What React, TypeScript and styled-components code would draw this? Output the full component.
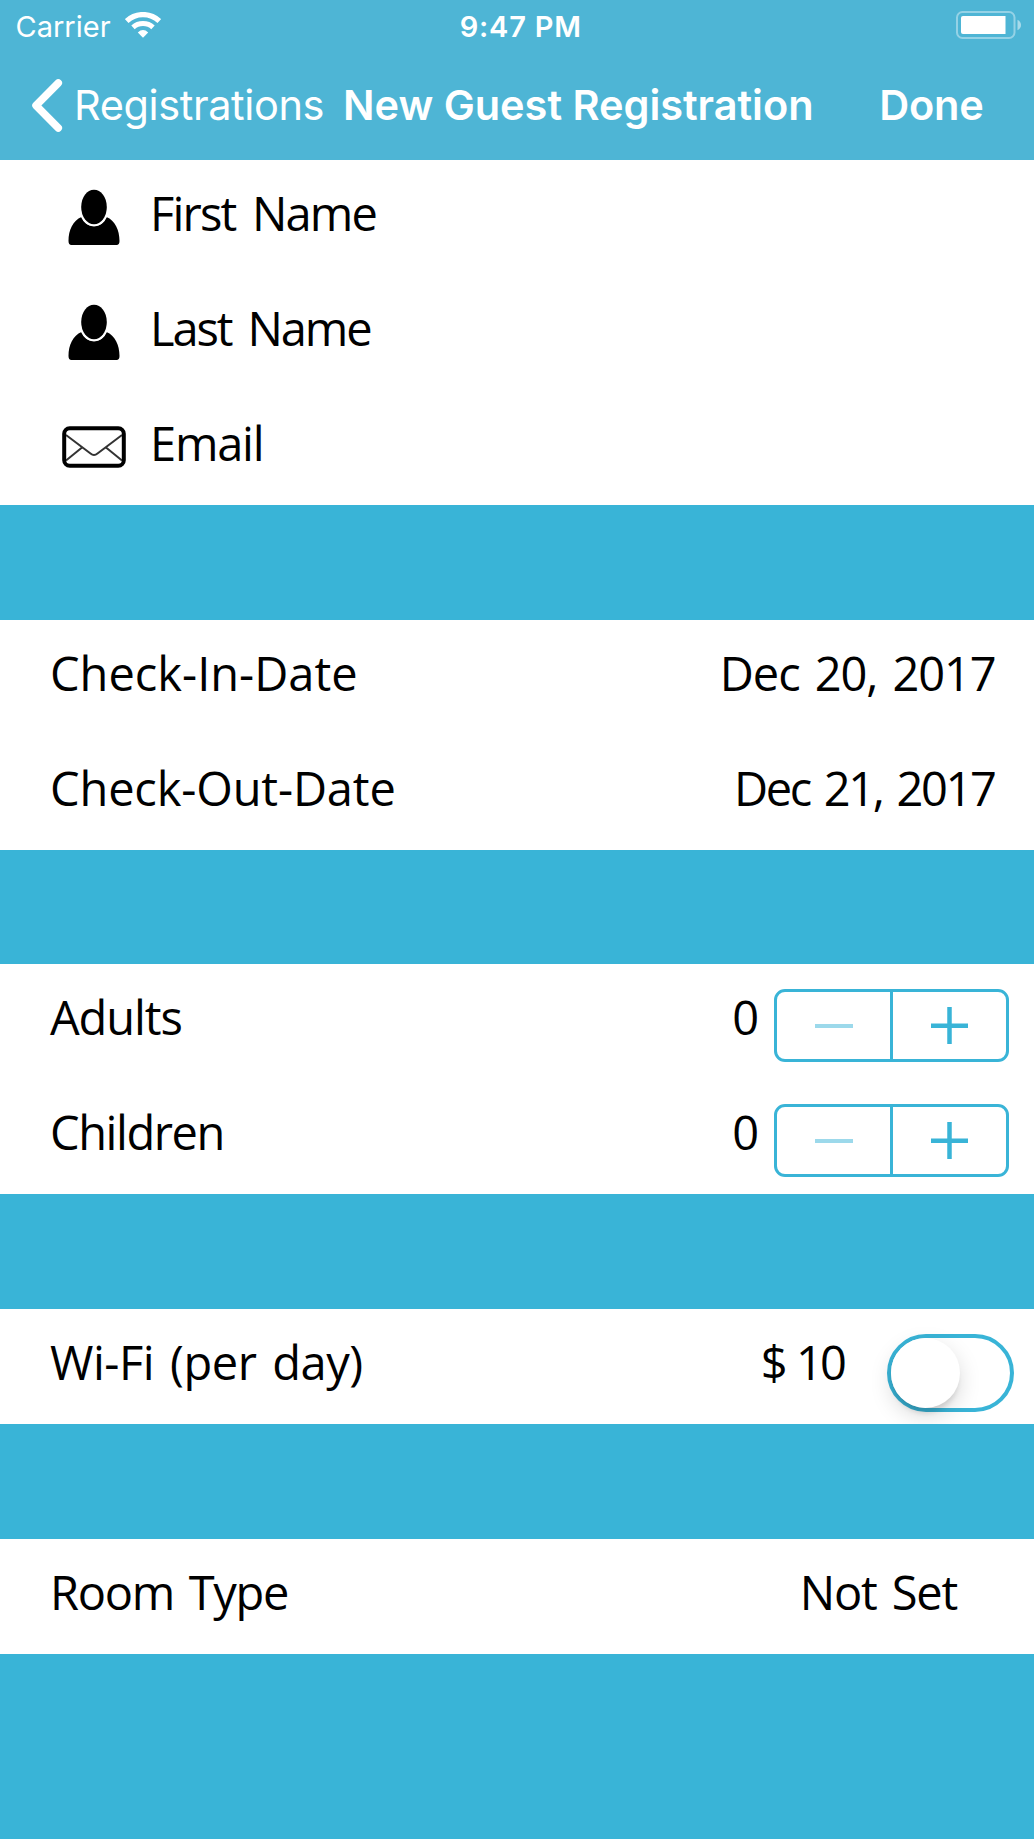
import React, { useState } from 'react';
import styled, { createGlobalStyle } from 'styled-components';

const accent = '#39b4d7';

const GlobalStyle = createGlobalStyle`
  *, *::before, *::after { box-sizing: border-box; }
  body { margin: 0; background: ${accent}; }
`;

const Screen = styled.main`
  display: flex;
  flex-direction: column;
  width: 1034px;
  height: 1839px;
  overflow: hidden;
  background: ${accent};
  color: #000;
  font-family: 'Open Sans', 'Noto Sans', sans-serif;
`;

const Header = styled.header`
  flex: none;
  height: 160px;
  background: #4eb5d5;
  color: #fff;
  font-family: Inter, 'Liberation Sans', sans-serif;
  white-space: nowrap;
`;

const StatusBar = styled.div`
  display: grid;
  grid-template-columns: 1fr auto 1fr;
  height: 52px;
  padding: 0 12px 0 15.5px;
  font-size: 29px;
  line-height: 53px;
`;

const Carrier = styled.div`
  display: flex;
  align-items: flex-start;
  gap: 14px;
  svg { margin-top: 12px; }
`;

const Clock = styled.time`
  margin-left: 4px;
  font-weight: 600;
  letter-spacing: 0.78px;
`;

const BatteryIcon = styled.svg`
  justify-self: end;
  margin-top: 11px;
`;

const NavBar = styled.nav`
  display: flex;
  padding: 0 50.5px 0 30px;
  font-size: 41.5px;
  line-height: 106px;
`;

const NavButton = styled.button<{ $strong?: boolean }>`
  display: flex;
  align-items: flex-start;
  margin: 0;
  padding: 0;
  border: 0;
  background: none;
  color: inherit;
  font: inherit;
  font-weight: ${(p) => (p.$strong ? 600 : 400)};
  letter-spacing: ${(p) => (p.$strong ? '-0.2px' : '-0.39px')};
  margin-left: ${(p) => (p.$strong ? 'auto' : '0')};
  svg { margin: 27px 10px 0 0; }
`;

const Title = styled.h1`
  margin: 0 0 0 19px;
  font: inherit;
  font-weight: 600;
  letter-spacing: -0.03px;
`;

const Form = styled.div`
  display: flex;
  flex-direction: column;
  gap: 114.7px;
`;

const Section = styled.section`
  background: #fff;
`;

const Row = styled.div<{ $end?: number }>`
  display: flex;
  align-items: flex-start;
  height: 115px;
  padding: 0 ${(p) => p.$end ?? 0}px 0 50px;
  font-size: 47px;
  line-height: 107px;
  white-space: nowrap;
`;

const SwitchRow = styled(Row)`
  overflow: hidden;
`;

const IconSlot = styled.span`
  flex: none;
  display: flex;
  justify-content: center;
  width: 87px;
  margin-right: 13px;
`;

const PersonSlot = styled(IconSlot)`
  padding-top: 29px;
`;

const MailSlot = styled(IconSlot)`
  padding-top: 36px;
`;

const Label = styled.span<{ $tracking: number; $gap?: number }>`
  letter-spacing: ${(p) => p.$tracking}px;
  word-spacing: ${(p) => p.$gap ?? 4}px;
`;

const Value = styled(Label)`
  margin-left: auto;
`;

const StepperBox = styled.div`
  display: grid;
  grid-template-columns: 113px 116px;
  width: 235px;
  height: 73px;
  margin: 25px 0 0 15px;
  border: 3px solid ${accent};
  border-radius: 11px;
  overflow: hidden;
`;

const StepButton = styled.button`
  display: flex;
  align-items: center;
  justify-content: center;
  padding: 0;
  border: 0;
  background: none;
  color: ${accent};
  & + & { border-left: 3px solid ${accent}; }
  &:disabled { padding-left: 1px; color: #9cd9eb; }
`;

const Switch = styled.button<{ $on: boolean }>`
  display: flex;
  flex: none;
  justify-content: ${(p) => (p.$on ? 'flex-end' : 'flex-start')};
  width: 127px;
  height: 78px;
  margin: 25px 0 0 43px;
  padding: 0;
  border: 4px solid ${accent};
  border-radius: 39px;
  background: ${(p) => (p.$on ? accent : '#fff')};
`;

const Knob = styled.span`
  width: 69px;
  height: 70px;
  border-radius: 50%;
  background: #fff;
  box-shadow: 0 8px 22px rgba(0, 0, 0, 0.15), 0 7px 5px -2px rgba(0, 0, 0, 0.11);
`;

function PersonIcon() {
  return (
    <svg width="54" height="58" viewBox="0 0 54 58">
      <path d="M14.5 28Q18 37 27 37T39.5 28C48 31.5 52.500 41 52.500 52Q52.500 56 49.500 56H4.500Q1.500 56 1.500 52C1.500 41 6 31.500 14.500 28Z" />
      <ellipse cx="27" cy="18.500" rx="14.900" ry="19" fill="#fff" />
      <ellipse cx="27" cy="18" rx="12.800" ry="17.200" />
    </svg>
  );
}

function MailIcon() {
  return (
    <svg width="64" height="42" viewBox="0 0 64 42" fill="none" stroke="#000">
      <rect x="2.200" y="2.200" width="59.600" height="37.600" rx="5.500" strokeWidth="4" />
      <path d="M4 9 28.500 27.500Q32 30.500 35.500 27.500L60 9M4 34.500 20 21.500M60 34.500 44 21.500" strokeWidth="2" strokeOpacity=".8" />
    </svg>
  );
}

function Stepper({ value, onChange }: { value: number; onChange: (n: number) => void }) {
  return (
    <StepperBox>
      <StepButton disabled={value === 0} aria-label="Decrease" onClick={() => onChange(value - 1)}>
        <svg width="38" height="39" viewBox="0 0 38 39"><path d="M0 18H38V22H0Z" fill="currentColor" /></svg>
      </StepButton>
      <StepButton aria-label="Increase" onClick={() => onChange(value + 1)}>
        <svg width="37" height="37" viewBox="0 0 37 37"><path d="M0 18.700H37M18.500 0V37" stroke="currentColor" strokeWidth="4.500" /></svg>
      </StepButton>
    </StepperBox>
  );
}

export default function App() {
  const [adults, setAdults] = useState(0);
  const [children, setChildren] = useState(0);
  const [wifi, setWifi] = useState(false);
  return (
    <Screen>
      <GlobalStyle />
      <Header>
        <StatusBar>
          <Carrier>
            Carrier
            <svg width="36" height="26" viewBox="0 0 36 26" fill="none" stroke="#fff">
              <path d="M1.700 9C11 .5 25 .5 34.300 9" strokeWidth="5.400" />
              <path d="M8 15.400C13.500 10.300 22.500 10.300 28 15.400" strokeWidth="5" />
              <path d="M18 25.700 12.800 20.500Q18 15.700 23.200 20.500Z" fill="#fff" stroke="none" />
            </svg>
          </Carrier>
          <Clock>9:47 PM</Clock>
          <BatteryIcon width="66" height="28" viewBox="0 0 66 28">
            <rect x="1" y="1" width="57.500" height="26" rx="5.500" fill="none" stroke="#fff" strokeOpacity=".4" strokeWidth="2" />
            <path d="M7 5H49.500V23H7Q5 23 5 21V7Q5 5 7 5Z" fill="#fff" />
            <path d="M61.500 8.700Q65 10.500 65 14T61.500 19.300Z" fill="#fff" fillOpacity=".5" />
          </BatteryIcon>
        </StatusBar>
        <NavBar>
          <NavButton>
            <svg width="34" height="53" viewBox="0 0 34 53" fill="none" stroke="#fff" strokeWidth="7.500">
              <path d="M28.300 4 6 26.500 28.300 49" strokeLinecap="round" strokeLinejoin="round" />
            </svg>
            Registrations
          </NavButton>
          <Title>New Guest Registration</Title>
          <NavButton $strong>Done</NavButton>
        </NavBar>
      </Header>
      <Form>
        <Section>
          <Row><PersonSlot><PersonIcon /></PersonSlot><Label $tracking={-1.8} $gap={6}>First Name</Label></Row>
          <Row><PersonSlot><PersonIcon /></PersonSlot><Label $tracking={-2.1} $gap={6}>Last Name</Label></Row>
          <Row><MailSlot><MailIcon /></MailSlot><Label $tracking={-1.23}>Email</Label></Row>
        </Section>
        <Section>
          <Row $end={38.5}><Label $tracking={0}>Check-In-Date</Label><Value $tracking={-1.1}>Dec 20, 2017</Value></Row>
          <Row $end={39.5}><Label $tracking={-0.15}>Check-Out-Date</Label><Value $tracking={-2.36}>Dec 21, 2017</Value></Row>
        </Section>
        <Section>
          <Row $end={25}><Label $tracking={-1.1}>Adults</Label><Value $tracking={0}>{adults}</Value><Stepper value={adults} onChange={setAdults} /></Row>
          <Row $end={25}><Label $tracking={-1.43}>Children</Label><Value $tracking={0}>{children}</Value><Stepper value={children} onChange={setChildren} /></Row>
        </Section>
        <Section>
          <SwitchRow $end={20}>
            <Label $tracking={-0.45}>Wi-Fi (per day)</Label>
            <Value $tracking={-2.9} $gap={2}>$ 10</Value>
            <Switch $on={wifi} role="switch" aria-checked={wifi} onClick={() => setWifi(!wifi)}><Knob /></Switch>
          </SwitchRow>
        </Section>
        <Section>
          <Row $end={77}><Label $tracking={-1.3}>Room Type</Label><Value $tracking={-1.2}>Not Set</Value></Row>
        </Section>
      </Form>
    </Screen>
  );
}
